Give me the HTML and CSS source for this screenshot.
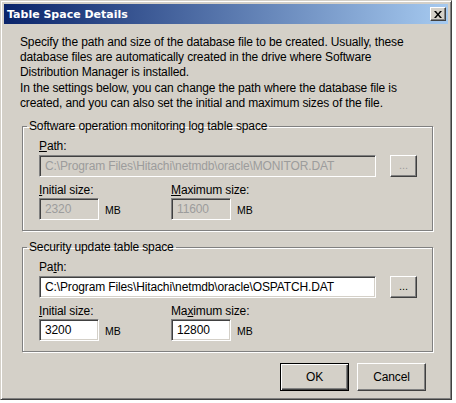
FILE: index.html
```
<!DOCTYPE html>
<html>
<head>
<meta charset="utf-8">
<link rel="stylesheet" href="styles.css">
</head>
<body>
<div class="window">
  <div class="titlebar">
    <span class="title">Table Space Details</span>
    <span class="close"><svg width="8" height="7" viewBox="0 0 8 7"><path d="M0 0h2l2 2.5 2-2.5h2l-3 3.5 3 3.5h-2l-2-2.5-2 2.5h-2l3-3.5z" fill="#000"/></svg></span>
  </div>
  <div class="content">
    <p class="intro">Specify the path and size of the database file to be created. Usually, these database files are automatically created in the drive where Software Distribution Manager is installed.<br>In the settings below, you can change the path where the database file is created, and you can also set the initial and maximum sizes of the file.</p>

    <fieldset class="group disabled">
      <legend>Software operation monitoring log table space</legend>
      <div class="label"><u>P</u>ath:</div>
      <div class="pathrow">
        <div class="field path">C:\Program Files\Hitachi\netmdb\oracle\MONITOR.DAT</div>
        <div class="btn small">...</div>
      </div>
      <div class="sizes">
        <div class="size">
          <div class="label"><u>I</u>nitial size:</div>
          <div class="sizerow"><div class="field num">2320</div><span class="mb">MB</span></div>
        </div>
        <div class="size">
          <div class="label"><u>M</u>aximum size:</div>
          <div class="sizerow"><div class="field num">11600</div><span class="mb">MB</span></div>
        </div>
      </div>
    </fieldset>

    <fieldset class="group second">
      <legend>Security update table space</legend>
      <div class="label">Pa<u>t</u>h:</div>
      <div class="pathrow">
        <div class="field path">C:\Program Files\Hitachi\netmdb\oracle\OSPATCH.DAT</div>
        <div class="btn small">...</div>
      </div>
      <div class="sizes">
        <div class="size">
          <div class="label"><u>I</u>nitial size:</div>
          <div class="sizerow"><div class="field num">3200</div><span class="mb">MB</span></div>
        </div>
        <div class="size">
          <div class="label">Ma<u>x</u>imum size:</div>
          <div class="sizerow"><div class="field num">12800</div><span class="mb">MB</span></div>
        </div>
      </div>
    </fieldset>

    <div class="buttons">
      <div class="btn default">OK</div>
      <div class="btn">Cancel</div>
    </div>
  </div>
</div>
</body>
</html>
```
FILE: styles.css
```
* { box-sizing: border-box; }
html, body { margin: 0; padding: 0; }
body {
  background: #ffffff;
  font-family: "Liberation Sans", Arial, sans-serif;
  font-size: 12px;
  letter-spacing: -0.13px;
  color: #000;
}
.window {
  width: 452px;
  height: 400px;
  background: #d4d0c8;
  border: 1px solid;
  border-color: #d4d0c8 #404040 #404040 #d4d0c8;
  box-shadow: inset 1px 1px 0 #ffffff, inset -1px -1px 0 #808080;
  padding: 3px;
  display: flex;
  flex-direction: column;
}
.titlebar {
  height: 20px;
  flex: none;
  background: linear-gradient(to right, #0a246a, #a6caf0);
  display: flex;
  align-items: center;
  justify-content: space-between;
  padding: 0 2px 0 3px;
}
.title {
  font-family: "DejaVu Sans", Verdana, sans-serif;
  font-weight: bold;
  font-size: 11px;
  letter-spacing: 0;
  color: #fff;
  padding-top: 1px;
}
.close {
  width: 16px;
  height: 14px;
  background: #d4d0c8;
  border: 1px solid;
  border-color: #ffffff #404040 #404040 #ffffff;
  box-shadow: inset -1px -1px 0 #808080;
  display: flex;
  align-items: center;
  justify-content: center;
}
.content {
  padding: 11px 0 0 18px;
  display: flex;
  flex-direction: column;
}
.intro {
  margin: 0 0 0 -2px;
  width: 392px;
  line-height: 15.2px;
}
.group {
  margin: 8px 0 0 0;
  width: 411px;
  border: 1px solid #808080;
  box-shadow: 1px 1px 0 #ffffff, inset 1px 1px 0 #ffffff;
  padding: 0 0 10px 16px;
  min-width: 0;
}
.group.second { margin-top: 9px; }
.group legend {
  padding: 0 2px;
  margin-left: -12px;
  line-height: 14px;
}
.label { line-height: 14px; margin-top: 6px; }
.pathrow {
  display: flex;
  align-items: flex-start;
  margin-top: 2px;
  gap: 14px;
}
.field {
  background: #fff;
  border: 1px solid;
  border-color: #808080 #ffffff #ffffff #808080;
  box-shadow: inset 1px 1px 0 #404040, inset -1px -1px 0 #d4d0c8;
  height: 22px;
  line-height: 20px;
  padding: 0 3px 0 5px;
  white-space: nowrap;
  overflow: hidden;
}
.path { width: 337px; }
.disabled .field { background: #d4d0c8; color: #9c9c9c; }
.btn {
  border: 1px solid;
  border-color: #ffffff #404040 #404040 #ffffff;
  box-shadow: inset -1px -1px 0 #808080;
  background: #d4d0c8;
  display: flex;
  align-items: center;
  justify-content: center;
}
.btn.small { width: 27px; height: 22px; padding-bottom: 2px; font-size: 11px; }
.disabled .btn.small { color: #9c9c9c; }
.sizes {
  display: flex;
}
.size { width: 132px; }
.size .label { margin-top: 6px; }
.sizerow { display: flex; align-items: center; margin-top: 1px; }
.num { width: 60px; }
.mb { margin-left: 6px; font-size: 10.5px; letter-spacing: 0; line-height: 12px; padding-top: 2px; }
.buttons {
  display: flex;
  justify-content: flex-end;
  gap: 8px;
  margin-top: 11px;
  margin-right: 22px;
}
.buttons .btn { width: 69px; height: 28px; }
.btn.default {
  border: 1px solid #000;
  box-shadow: inset 1px 1px 0 #ffffff, inset -1px -1px 0 #404040, inset -2px -2px 0 #808080;
}
```
